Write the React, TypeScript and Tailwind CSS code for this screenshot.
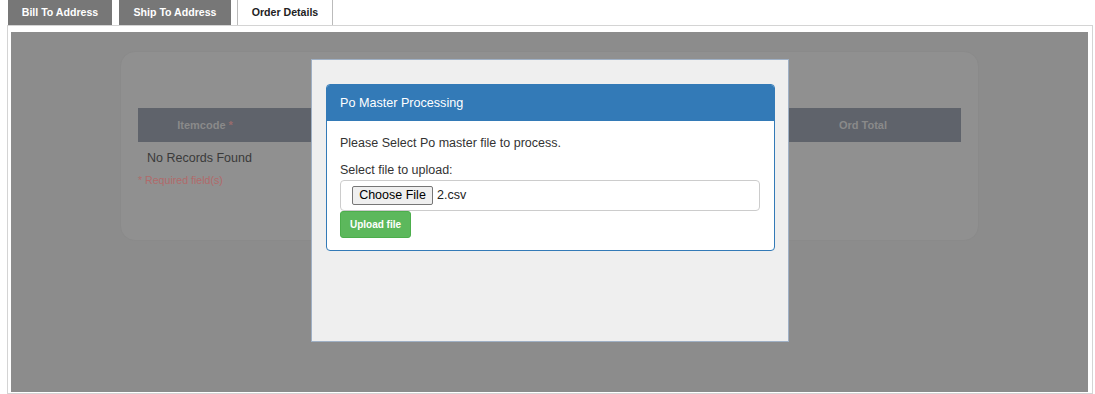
import React from 'react';

const font = { fontFamily: '"Liberation Sans", Arial, sans-serif' };

export default function App() {
  return (
    <div className="w-[1095px] h-[394px] bg-white overflow-hidden" style={font}>
      {/* Tabs */}
      <div className="flex items-end h-[25px] pl-[8px] gap-[6px]">
        <div className="h-[25px] w-[104px] bg-[#777777] text-white text-[10.6px] font-bold flex items-center justify-center">
          Bill To Address
        </div>
        <div className="h-[25px] w-[112px] ml-[1px] bg-[#777777] text-white text-[10.6px] font-bold flex items-center justify-center">
          Ship To Address
        </div>
        <div className="h-[25px] w-[96px] bg-white border-x border-[#bbbbbb] text-[#222] text-[10.6px] font-bold flex items-center justify-center">
          Order Details
        </div>
      </div>

      {/* Content panel */}
      <div className="ml-[7px] w-[1086px] h-[369px] border border-[#d4d4d4] pt-[6px] pl-[3px] pr-[3px]">
        <div className="relative w-[1077px] h-[360px] bg-[#8c8c8c] pt-[19px] pl-[109px]">
          {/* Dimmed card behind modal */}
          <div className="w-[859px] h-[190px] rounded-[15px] bg-[#909090] border border-[#8a8a8a] pt-[56px] px-[17px]">
            <div className="flex h-[34px] bg-[#5f636b] text-[#8a8a8a] text-[11px] font-bold">
              <div className="w-[134px] flex items-center justify-center">
                Itemcode <span className="text-[#9a6c6c] ml-[3px]">*</span>
              </div>
              <div className="flex-1 flex items-center justify-around">
                <span>Description</span>
                <span>Quantity</span>
                <span>Price</span>
              </div>
              <div className="w-[196px] flex items-center justify-center">Ord Total</div>
            </div>
            <div className="pl-[9px] pt-[9px] text-[12.5px] leading-[15px] text-[#3a3a3a]">No Records Found</div>
            <div className="pt-[8px] text-[10.6px] leading-[13px] text-[#b06a6a]">* Required field(s)</div>
          </div>

          {/* Modal */}
          <div className="absolute left-[300px] top-[27px] w-[478px] h-[283px] bg-[#efefef] border border-[#9fb0c5] pt-[24px] pl-[14px]">
            <div className="w-[449px] bg-white border border-[#337ab7] rounded-[4px] overflow-hidden">
              <div className="h-[36px] bg-[#337ab7] text-white text-[12.6px] flex items-center pl-[13px]">
                Po Master Processing
              </div>
              <div className="px-[13px] pt-[13px] pb-[12px] text-[#333] text-[12.5px]">
                <div className="leading-[18px]">Please Select Po master file to process.</div>
                <div className="leading-[18px] mt-[9px]">Select file to upload:</div>
                <div className="mt-[1px] h-[31px] w-[420px] border border-[#cccccc] rounded-[4px] flex items-center pl-[11px]">
                  <span className="h-[19px] w-[81px] bg-[#efefef] border border-[#767676] rounded-[2px] text-[#000] text-[12.5px] leading-[17px] flex items-center justify-center">
                    Choose File
                  </span>
                  <span className="ml-[4px] text-[12.5px] text-[#222]">2.csv</span>
                </div>
                <button className="h-[27px] w-[71px] bg-[#5cb85c] border border-[#4cae4c] rounded-[3px] text-white text-[10px] font-bold">
                  Upload file
                </button>
              </div>
            </div>
          </div>
        </div>
      </div>
    </div>
  );
}
